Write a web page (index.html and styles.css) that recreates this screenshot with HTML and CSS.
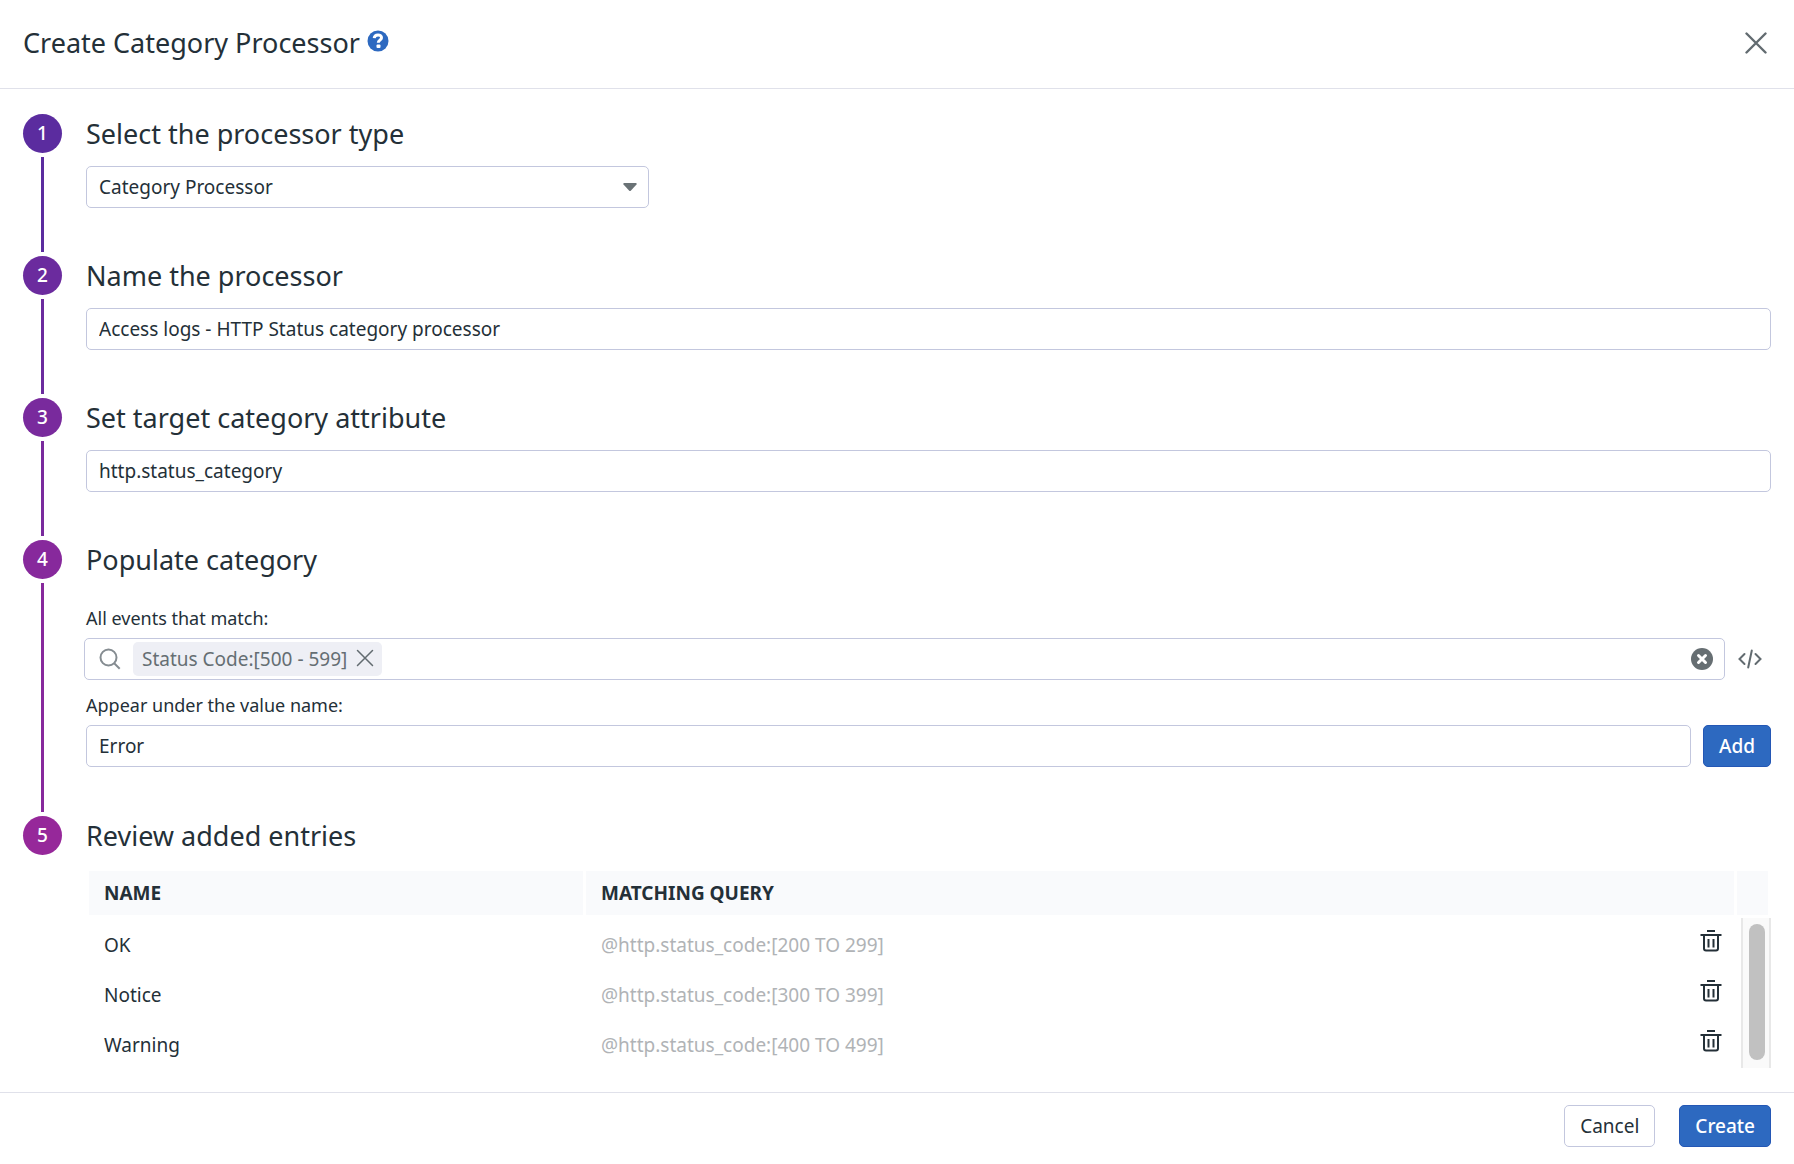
FILE: index.html
```
<!DOCTYPE html>
<html lang="en">
<head>
    <meta charset="utf-8">
    <title>Create Category Processor</title>
    <link rel="stylesheet" href="styles.css">
</head>
<body>
    <svg class="sprite" aria-hidden="true">
        <symbol id="trash" viewBox="0 0 22 22">
            <path d="M7 1h8M.5 5h21" stroke-width="2"/>
            <path d="M4 5v13.500q0 2 2 2h10q2 0 2-2V5" stroke-width="2"/>
            <path d="M8.500 9v8.500M13.500 9v8.500" stroke-width="2"/>
        </symbol>
    </svg>

    <header class="header">
        <h1>Create Category Processor</h1>
        <a class="help" href="#" aria-label="Help">
            <svg width="22" height="22" viewBox="0 0 22 22">
                <circle cx="11" cy="11" r="10.500" fill="#2d69c0"/>
                <path d="M7.200 8.200C7.500 3.700 14.800 4 14.500 7.900C14.300 10.200 11.300 10.200 11.300 12.800" fill="none" stroke="#fff" stroke-width="3"/>
                <rect x="9.500" y="14.500" width="4" height="3.500" rx="1" fill="#fff"/>
            </svg>
        </a>
        <button class="icon-btn close" aria-label="Close">
            <svg width="22" height="22" viewBox="0 0 22 22"><path d="M1.500 1.500l19 19M20.500 1.500l-19 19" stroke-width="2.400"/></svg>
        </button>
    </header>

    <main class="steps">
        <section class="step step-1">
            <div class="rail"><span class="num">1</span></div>
            <div class="content">
                <h2><label for="type">Select the processor type</label></h2>
                <div class="select">
                    <select id="type">
                        <option>Category Processor</option>
                    </select>
                    <svg class="caret" width="14" height="8" viewBox="0 0 14 8"><path d="M.5 0h13v1.500L7.500 8h-1L.5 1.500z" fill="#6a7276"/></svg>
                </div>
            </div>
        </section>

        <section class="step step-2">
            <div class="rail"><span class="num">2</span></div>
            <div class="content">
                <h2><label for="name">Name the processor</label></h2>
                <input class="field" id="name" type="text" value="Access logs - HTTP Status category processor">
            </div>
        </section>

        <section class="step step-3">
            <div class="rail"><span class="num">3</span></div>
            <div class="content">
                <h2><label for="target">Set target category attribute</label></h2>
                <input class="field" id="target" type="text" value="http.status_category">
            </div>
        </section>

        <section class="step step-4">
            <div class="rail"><span class="num">4</span></div>
            <div class="content">
                <h2>Populate category</h2>
                <label class="label first" for="query">All events that match:</label>
                <div class="query-row">
                    <div class="search">
                        <svg class="glass" width="22" height="22" viewBox="0 0 22 22"><circle cx="9.500" cy="9.500" r="8"/><path d="M15.200 15.200l5.500 5.500"/></svg>
                        <span class="tag">Status Code:[500 - 599]
                            <button class="icon-btn" aria-label="Remove">
                                <svg width="18" height="18" viewBox="0 0 18 18"><path d="M1.500 1.500l15 15M16.500 1.500l-15 15" stroke-width="1.500"/></svg>
                            </button>
                        </span>
                        <input id="query" type="text">
                        <button class="icon-btn" aria-label="Clear">
                            <svg width="22" height="22" viewBox="0 0 22 22"><circle cx="11" cy="11" r="11" fill="#666e72" stroke="none"/><path d="M7.500 7.500l7 7M14.500 7.500l-7 7" stroke="#fff" stroke-width="3"/></svg>
                        </button>
                    </div>
                    <button class="icon-btn" aria-label="Edit as code">
                        <svg width="24" height="20" viewBox="0 0 24 20"><path d="M6.500 5L1.500 10l5 5M17.500 5l5 5-5 5M13.800 1.500l-3.600 17" stroke-width="2"/></svg>
                    </button>
                </div>
                <label class="label" for="value">Appear under the value name:</label>
                <div class="value-row">
                    <input class="field" id="value" type="text" value="Error">
                    <button class="btn primary">Add</button>
                </div>
            </div>
        </section>

        <section class="step step-5">
            <div class="rail"><span class="num">5</span></div>
            <div class="content">
                <h2>Review added entries</h2>
                <table class="entries">
                    <thead>
                        <tr>
                            <th class="col-name">NAME</th>
                            <th>MATCHING QUERY</th>
                            <th class="col-scroll"></th>
                        </tr>
                    </thead>
                    <tbody>
                        <tr>
                            <td>OK</td>
                            <td class="query"><div>@http.status_code:[200 TO 299] <button class="icon-btn trash" aria-label="Delete OK"><svg width="22" height="22"><use href="#trash"/></svg></button></div></td>
                            <td class="scroll" rowspan="3"><div class="track"><div class="thumb"></div></div></td>
                        </tr>
                        <tr>
                            <td>Notice</td>
                            <td class="query"><div>@http.status_code:[300 TO 399] <button class="icon-btn trash" aria-label="Delete Notice"><svg width="22" height="22"><use href="#trash"/></svg></button></div></td>
                        </tr>
                        <tr>
                            <td>Warning</td>
                            <td class="query"><div>@http.status_code:[400 TO 499] <button class="icon-btn trash" aria-label="Delete Warning"><svg width="22" height="22"><use href="#trash"/></svg></button></div></td>
                        </tr>
                    </tbody>
                </table>
            </div>
        </section>
    </main>

    <footer class="footer">
        <button class="btn">Cancel</button>
        <button class="btn primary">Create</button>
    </footer>
</body>
</html>
```
FILE: styles.css
```
*{
    box-sizing: border-box;
}
body{
    margin: 0;
    min-height: 100vh;
    display: flex;
    flex-direction: column;
    background: #fff;
    color: #243038;
    font: 19px/28px "Noto Sans", sans-serif;
}
button, input, select{
    font: inherit;
    color: inherit;
}
svg{
    display: block;
}
.sprite{
    display: none;
}

.header{
    display: flex;
    align-items: center;
    gap: 7px;
    height: 89px;
    padding: 0 27px 3px 23px;
    border-bottom: 1px solid #e0e1ea;
}
h1, h2{
    margin: 0;
    font-size: 27px;
    font-weight: 400;
    line-height: 39px;
}
.help{
    padding-bottom: 4px;
}
.close{
    margin-left: auto;
}
.icon-btn{
    padding: 0;
    border: 0;
    background: none;
    cursor: pointer;
}
.icon-btn svg{
    fill: none;
    stroke: #626b70;
    stroke-linecap: round;
}

/* steps */
.steps{
    padding: 25px 23px 24px;
}
.step{
    display: flex;
    gap: 24px;
}
.step-1{ --c: #5b2c9f; }
.step-2{ --c: #6b2b9e; }
.step-3{ --c: #792a9d; }
.step-4{ --c: #87299c; }
.step-5{ --c: #96289a; }
.rail{
    display: flex;
    flex-direction: column;
    align-items: center;
}
.num{
    width: 39px;
    height: 39px;
    border-radius: 50%;
    background: var(--c);
    color: #fff;
    font-weight: 500;
    line-height: 39px;
    text-align: center;
}
.rail::after{
    content: "";
    flex: 1;
    width: 3px;
    margin: 4px 0;
    background: var(--c);
}
.step-5 .rail::after{
    display: none;
}
.content{
    flex: 1;
    min-width: 0;
    padding-bottom: 48px;
}
.step-4 .content{
    padding-bottom: 49px;
}
.step-5 .content{
    padding-bottom: 0;
}
h2{
    margin-bottom: 13px;
}

/* fields */
.field, select{
    display: block;
    width: 100%;
    height: 42px;
    padding: 0 12px;
    border: 1px solid #c3c7de;
    border-radius: 5px;
    background: #fff;
}
.select{
    position: relative;
    width: 33.4%;
}
select{
    appearance: none;
}
.caret{
    position: absolute;
    right: 12px;
    top: 17px;
}
.label{
    display: block;
    margin: 13px 0 8px;
    font-size: 18px;
    line-height: 24px;
}
.label.first{
    margin-top: 27px;
}
.query-row, .value-row{
    display: flex;
    align-items: center;
    gap: 12px;
}
.query-row{
    gap: 13px;
    margin-left: -2px;
    padding-right: 9px;
}
.search{
    flex: 1;
    display: flex;
    align-items: center;
    gap: 12px;
    height: 42px;
    padding: 0 11px 0 14px;
    border: 1px solid #c3c7de;
    border-radius: 5px;
}
.search input{
    flex: 1;
    min-width: 0;
    border: 0;
    outline: 0;
    background: none;
}
.glass{
    fill: none;
    stroke: #858c91;
    stroke-width: 2;
}
.tag{
    display: flex;
    align-items: center;
    gap: 9px;
    height: 34px;
    padding: 0 8px 0 9px;
    border-radius: 5px;
    background: #eeeff5;
    color: #656e73;
}
.tag .icon-btn{
    padding-bottom: 3px;
}

.btn{
    height: 42px;
    padding: 0 15px;
    border: 1px solid #c3c7de;
    border-radius: 5px;
    background: #fff;
    cursor: pointer;
}
.primary{
    border-color: #2457b5;
    background: #2d69c0;
    color: #fff;
    font-weight: 500;
}

/* table */
.entries{
    width: 100%;
    table-layout: fixed;
    border-spacing: 3px 3px;
}
th{
    height: 44px;
    padding: 0 15px;
    background: #f9fafc;
    text-align: left;
}
.col-name{
    width: 494px;
}
.col-scroll{
    width: 31px;
    padding: 0;
}
td{
    height: 47px;
    padding: 13px 15px 6px 15px;
    vertical-align: top;
}
.query{
    padding-right: 12px;
    color: #b0b3b6;
}
.query div{
    display: flex;
    justify-content: space-between;
}
.trash{
    height: 22px;
    margin-top: -1px;
}
.trash svg{
    stroke: #243038;
    stroke-linecap: butt;
}
.scroll{
    padding: 0;
}
.track{
    height: 150px;
    margin: 0 -3px -3px 4px;
    padding: 6px 4px 8px 6px;
    border: solid #e8e8e8;
    border-width: 0 2px;
    background: #fafafa;
}
.thumb{
    height: 100%;
    border-radius: 8px;
    background: #c1c1c1;
}

.footer{
    display: flex;
    justify-content: flex-end;
    gap: 24px;
    margin-top: auto;
    padding: 12px 23px 17px;
    border-top: 1px solid #e0e1ea;
}
```
